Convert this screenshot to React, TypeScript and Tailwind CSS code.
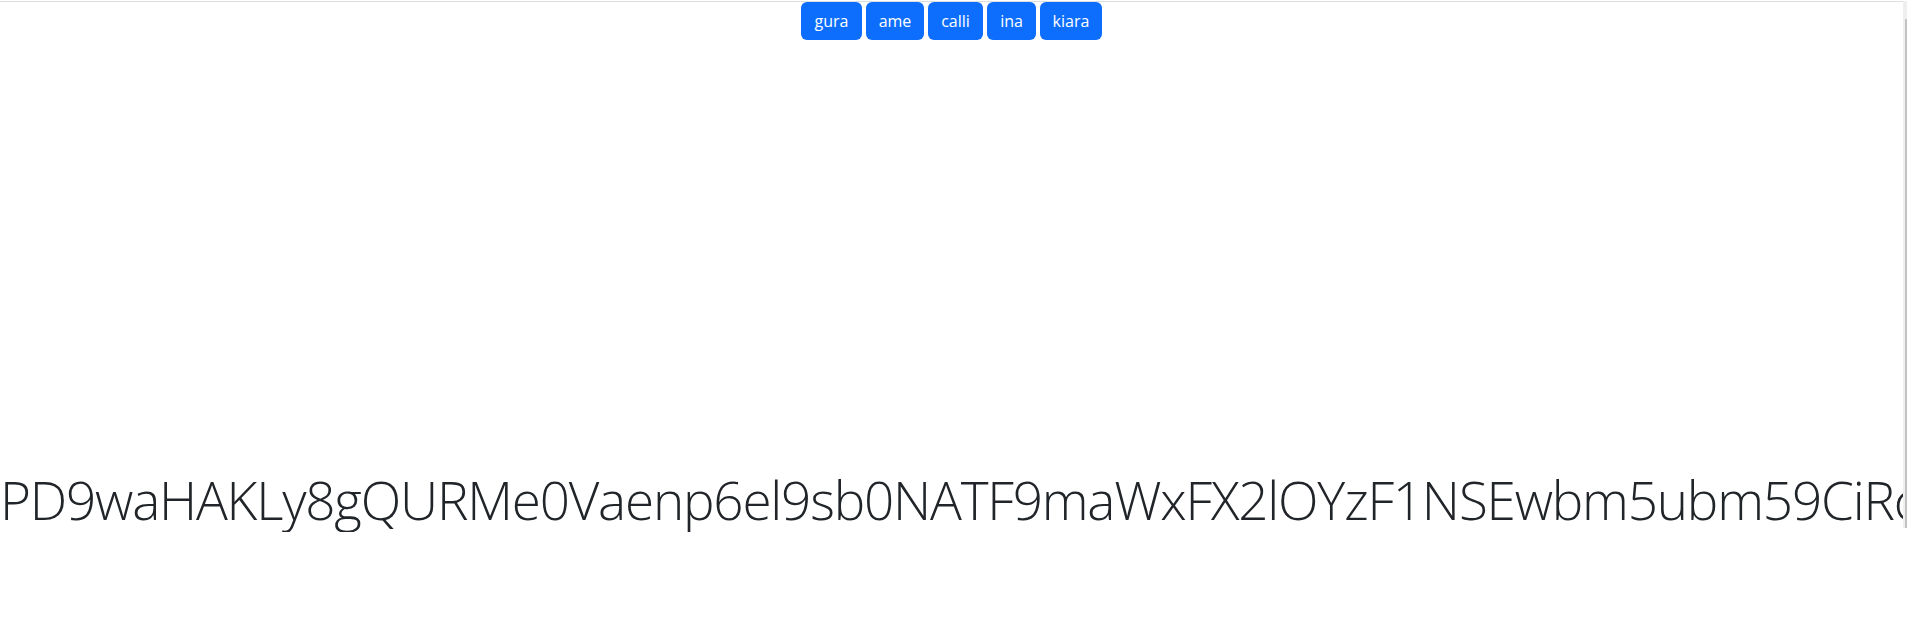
const names = [
  { label: "gura", w: "w-[61px]" },
  { label: "ame", w: "w-[58px]" },
  { label: "calli", w: "w-[55px]" },
  { label: "ina", w: "w-[49px]" },
  { label: "kiara", w: "w-[62px]" },
];

const secret =
  "PD9waHAKLy8gQURMe0Vaenp6el9sb0NATF9maWxFX2lOYzF1NSEwbm5ubm59CiRcb2RlID0gJF9HRVRbJ2ZpbGUnXTsK";

const App = () => {
  return (
    <div className="relative h-[625px] bg-white font-['Open_Sans','Noto_Sans',sans-serif] text-[#212529]">
      <div className="w-[1903px] overflow-hidden">
        <div className="mt-px h-px bg-[#dedede]" />
        <div className="flex justify-center gap-1">
          {names.map((n) => (
            <button
              key={n.label}
              className={`${n.w} h-[38px] rounded-[6px] bg-[#0d6efd] text-base text-white`}
            >
              {n.label}
            </button>
          ))}
        </div>
        <h1 className="mt-[428px] whitespace-nowrap text-[53px] font-light leading-[1.2] tracking-[-1.2px]">
          {secret}
        </h1>
      </div>
      <div className="absolute right-0 top-px h-[527px] w-[4px] bg-[#efefef]">
        <div className="mt-[18px] ml-auto h-[509px] w-[2px] bg-[#c2c2c2]" />
      </div>
    </div>
  );
};

export default App;
